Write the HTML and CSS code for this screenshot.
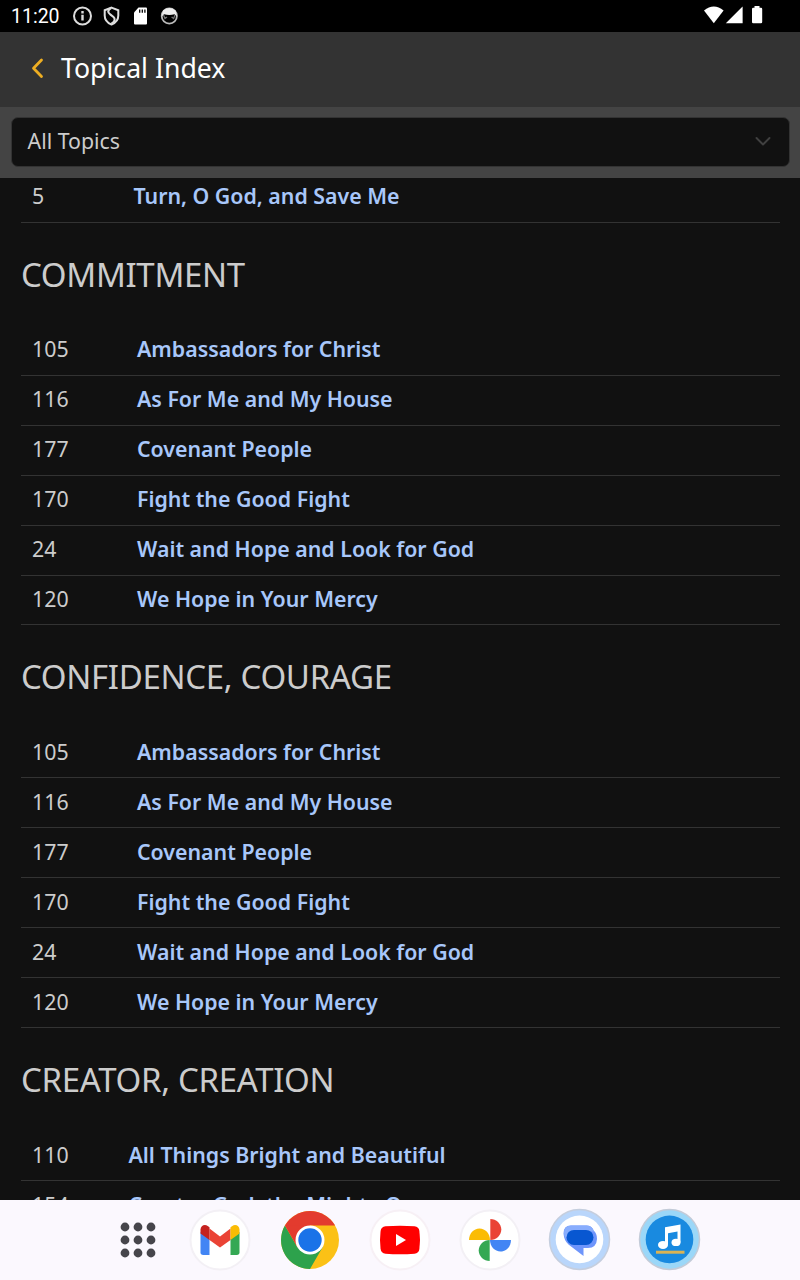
FILE: index.html
```
<!DOCTYPE html>
<html lang="en">
<head>
    <meta charset="UTF-8">
    <meta name="viewport" content="width=device-width, initial-scale=1.0">
    <title>Topical Index</title>
    <link rel="stylesheet" href="styles.css">
</head>
<body>
    <div class="status-bar">
        <span class="time">11:20</span>
        <svg class="status-left" width="108" height="22" viewBox="0 0 108 22" fill="none" stroke="#ddd" stroke-width="2">
            <!-- info -->
            <circle cx="10.5" cy="11" r="8.5"/>
            <path d="M10.5 9.800v5.700M10.500 6v2.400" stroke-width="2.400"/>
            <!-- shield -->
            <path d="M39.500 2.600l6.800 2.600v5.300c0 4.200-2.700 7.400-6.800 9-4.100-1.600-6.800-4.800-6.800-9V5.200z"/>
            <path d="M39 3c-3.600 2.200-3.600 4.500-.5 6.700l3 2.300c2.200 1.900 1.400 4.600-2 6.700" stroke-width="2.200"/>
            <!-- sd card -->
            <path d="M66.500 2.500H74a1 1 0 0 1 1 1v15a1 1 0 0 1-1 1H63a1 1 0 0 1-1-1V7.500z" fill="#fff" stroke="none"/>
            <path d="M67.700 4.500v3.200M70.300 4.500v3.200M72.900 4.500v3.200" stroke="#000" stroke-width="1.300"/>
            <!-- cat -->
            <circle cx="97.300" cy="11" r="7.600" stroke="#bbb" stroke-width="1.800"/>
            <path d="M91 5.500q6.300-5 12.600 0l1.400 6-2.500-2.200q-5.200 1.500-10.400 0L89.600 11.500z" fill="#eee" stroke="none"/>
            <path d="M91.500 10l1.500 3.500 2-1.500M103.100 10l-1.500 3.500-2-1.500" stroke="#777" stroke-width="1.300"/>
        </svg>
        <svg class="status-right" width="60" height="20" viewBox="0 0 60 20" fill="#fff">
            <path d="M0 5.600Q9.800-2.800 19.600 5.600L9.800 18.300z"/>
            <path d="M38.600 1.500v16.800H21.800z"/>
            <path d="M50.500 1h5v1.800H57a1.200 1.200 0 0 1 1.200 1.200v13a1.200 1.200 0 0 1-1.200 1.200h-7.800A1.200 1.200 0 0 1 48 17V4a1.200 1.200 0 0 1 1.200-1.200h1.300z"/>
        </svg>
    </div>

    <header class="header">
        <svg class="back" width="14" height="22" viewBox="0 0 14 22">
            <path d="M11.500 3L3.500 11.200l8 8.200" fill="none" stroke="#eeae22" stroke-width="2.800" stroke-linecap="round" stroke-linejoin="round"/>
        </svg>
        <h1>Topical Index</h1>
    </header>

    <div class="filter">
        <div class="select-box">
            <span>All Topics</span>
            <svg width="16" height="12" viewBox="0 0 16 12">
                <path d="M1.500 3L8 9.500 14.500 3" fill="none" stroke="#404040" stroke-width="1.900" stroke-linecap="round" stroke-linejoin="round"/>
            </svg>
        </div>
    </div>

    <main class="topics">
        <ul class="songs first">
            <li><span class="num">5</span><a>Turn, O God, and Save Me</a></li>
        </ul>

        <h2>COMMITMENT</h2>
        <ul class="songs commitment">
            <li><span class="num">105</span><a>Ambassadors for Christ</a></li>
            <li><span class="num">116</span><a>As For Me and My House</a></li>
            <li><span class="num">177</span><a>Covenant People</a></li>
            <li><span class="num">170</span><a>Fight the Good Fight</a></li>
            <li><span class="num">24</span><a>Wait and Hope and Look for God</a></li>
            <li><span class="num">120</span><a>We Hope in Your Mercy</a></li>
        </ul>

        <h2>CONFIDENCE, COURAGE</h2>
        <ul class="songs">
            <li><span class="num">105</span><a>Ambassadors for Christ</a></li>
            <li><span class="num">116</span><a>As For Me and My House</a></li>
            <li><span class="num">177</span><a>Covenant People</a></li>
            <li><span class="num">170</span><a>Fight the Good Fight</a></li>
            <li><span class="num">24</span><a>Wait and Hope and Look for God</a></li>
            <li><span class="num">120</span><a>We Hope in Your Mercy</a></li>
        </ul>

        <h2>CREATOR, CREATION</h2>
        <ul class="songs narrow">
            <li><span class="num">110</span><a>All Things Bright and Beautiful</a></li>
            <li><span class="num">154</span><a>Creator God, the Mighty One</a></li>
        </ul>
    </main>

    <nav class="dock">
        <svg class="apps" viewBox="0 0 62 62" fill="#46454b">
            <circle cx="18" cy="18" r="4.400"/><circle cx="31" cy="18" r="4.400"/><circle cx="44" cy="18" r="4.400"/>
            <circle cx="18" cy="31" r="4.400"/><circle cx="31" cy="31" r="4.400"/><circle cx="44" cy="31" r="4.400"/>
            <circle cx="18" cy="44" r="4.400"/><circle cx="31" cy="44" r="4.400"/><circle cx="44" cy="44" r="4.400"/>
        </svg>
        <!-- Gmail -->
        <svg viewBox="0 0 62 62">
            <circle cx="31" cy="31" r="29.500" fill="#fff" stroke="#f3f0f5" stroke-width="2"/>
            <path d="M11.500 23l9 7v16h-6.300a2.700 2.700 0 0 1-2.700-2.700z" fill="#4285f4"/>
            <path d="M50.500 23l-9 7v16h6.300a2.700 2.700 0 0 0 2.700-2.700z" fill="#34a853"/>
            <path d="M20.500 19.500L31 27.500l10.500-8V31L31 38.500 20.500 31z" fill="#ea4335"/>
            <path d="M11.500 24.500v-4c0-4 4.300-5.800 7.200-3.600l1.800 1.400V31z" fill="#c5221f"/>
            <path d="M50.500 24.500v-4c0-4-4.300-5.800-7.200-3.600l-1.800 1.400V31z" fill="#fbbc04"/>
        </svg>
        <!-- Chrome -->
        <svg viewBox="0 0 62 62">
            <circle cx="31" cy="31" r="29" fill="#fbc116"/>
            <path d="M31 31L5.900 16.500A29 29 0 0 1 56.100 16.500z" fill="#e33b2e"/>
            <path d="M31 16.500h25.100L43.600 38.200 31 31z" fill="#fbc116"/>
            <path d="M5.900 16.500A29 29 0 0 0 31 60l12.600-21.800L31 31 18.400 38.200z" fill="#2da24c"/>
            <path d="M5.900 16.500l12.500 21.700L31 31V16.500z" fill="#e33b2e"/>
            <circle cx="31" cy="31" r="14.500" fill="#fff"/>
            <circle cx="31" cy="31" r="11.700" fill="#1a73e8"/>
        </svg>
        <!-- YouTube -->
        <svg viewBox="0 0 62 62">
            <circle cx="31" cy="31" r="29.500" fill="#fff" stroke="#f7f0f5" stroke-width="2"/>
            <path d="M16.500 17.300q14.500-1.300 29 0 4.300.4 4.900 4.700 1.200 9 0 18-.6 4.300-4.900 4.700-14.500 1.300-29 0-4.300-.4-4.900-4.700-1.200-9 0-18 .6-4.300 4.900-4.700z" fill="#f00"/>
            <path d="M27 25v12l10-6z" fill="#fff"/>
        </svg>
        <!-- Photos -->
        <svg viewBox="0 0 62 62">
            <circle cx="31" cy="31" r="29.500" fill="#fff" stroke="#f3f0f5" stroke-width="2"/>
            <path d="M31.300 10c6 0 11 4.700 11 10.500S37.300 31 31.300 31z" fill="#ea4335"/>
            <path d="M52 31c0 6.500-4.700 11.500-10.500 11.500S31 37.500 31 31z" fill="#4285f4"/>
            <path d="M30.700 52c-6 0-11-4.700-11-10.500S24.700 31 30.700 31z" fill="#34a853"/>
            <path d="M10 31c0-6.500 4.700-11.500 10.500-11.500S31 24.500 31 31z" fill="#fbbc04"/>
        </svg>
        <!-- Messages -->
        <svg viewBox="0.5 0.6 62 62">
            <circle cx="31" cy="31" r="30" fill="#b9d6fb" stroke="#c5cede" stroke-width="1.500"/>
            <circle cx="31" cy="31" r="23.800" fill="#fff"/>
            <path d="M22.500 17H38a7.500 7.500 0 0 1 7 5q3.500 2.500 3.500 8.500-.5 9-9 9H35v8L20 36q-4.500-4-5-11 0-8 7.500-8z" fill="#6e95fb"/>
            <path d="M22.500 17H38a7.500 7.500 0 0 1 7.500 6H25q-6 0-7.500 7.500Q15.500 27.500 15.500 24.500 15.500 17 22.500 17z" fill="#88adfd"/>
            <rect x="18" y="21.500" width="27" height="15" rx="7.500" fill="#0857d1"/>
        </svg>
        <!-- Music -->
        <svg viewBox="0.5 0.6 62 62">
            <circle cx="31" cy="31" r="30" fill="#9bd7f8" stroke="#c3cbd8" stroke-width="1.500"/>
            <circle cx="31" cy="31" r="23.800" fill="#198ae0"/>
            <path d="M26.500 18.800L42 16v18h-3V23l-9.500 1.800V36h-3z" fill="#fff"/>
            <ellipse cx="24.500" cy="36.500" rx="5" ry="4" fill="#fff"/>
            <ellipse cx="37.500" cy="34" rx="4.500" ry="3.700" fill="#fff"/>
            <path d="M17.500 43.800H46" stroke="#dbb354" stroke-width="3"/>
        </svg>
    </nav>
</body>
</html>
```
FILE: styles.css
```
* {
    margin: 0;
    padding: 0;
    box-sizing: border-box;
}

body {
    height: 1280px;
    display: flex;
    flex-direction: column;
    overflow: hidden;
    background-color: #111;
    color: #ccc;
    font-family: "Noto Sans", sans-serif;
    font-size: 21.33px;
}

.status-bar {
    height: 32px;
    flex: none;
    display: flex;
    align-items: center;
    padding: 0 36px 0 11px;
    background-color: #000;
    color: #fff;
}

.time {
    width: 61px;
    padding-top: 1px;
    font-family: Roboto, sans-serif;
    font-size: 19.5px;
}

.status-right {
    margin-left: auto;
    margin-bottom: 2px;
}

.header {
    height: 75px;
    flex: none;
    display: flex;
    align-items: center;
    padding: 0 0 4px 30px;
    background-color: #333;
}

.header h1 {
    margin-left: 17px;
    color: #fff;
    font-size: 26.67px;
    font-weight: 400;
}

.filter {
    height: 71px;
    flex: none;
    padding: 10px 10px 11px 11px;
    background-color: #444;
}

.select-box {
    height: 50px;
    display: flex;
    align-items: center;
    justify-content: space-between;
    padding: 0 18px 3px 16px;
    background-color: #111;
    border: 1px solid #333;
    border-radius: 7px;
}

.select-box span {
    margin: -1px 0 0 -0.5px;
}

.topics {
    flex: 1;
    min-height: 0;
    overflow: hidden;
    padding: 0 20px 0 21px;
}

h2 {
    height: 102.95px;
    line-height: 103px;
    font-size: 33px;
    font-weight: 400;
    letter-spacing: -0.33px;
}

.songs {
    list-style: none;
}

.songs li {
    height: 50px;
    display: flex;
    align-items: center;
    padding: 0 0 3px 11px;
    border-bottom: 1px solid #333;
}

.songs.first {
    margin-top: -5px;
}

.songs.first li {
    padding-bottom: 5px;
}

.songs.commitment li:last-child {
    height: 49.5px;
}

.num {
    width: 105px;
}

.first .num {
    width: 101.5px;
}

.narrow .num {
    width: 96.5px;
}

.songs a {
    color: #a8c7fa;
    font-weight: 600;
}

.dock {
    height: 80px;
    flex: none;
    display: flex;
    align-items: center;
    justify-content: center;
    gap: 28px;
    padding-left: 8px;
    background-color: #fbf8fe;
}

.dock svg {
    width: 62px;
    height: 62px;
    overflow: visible;
}

.dock .apps {
    margin-right: -8px;
}
```
